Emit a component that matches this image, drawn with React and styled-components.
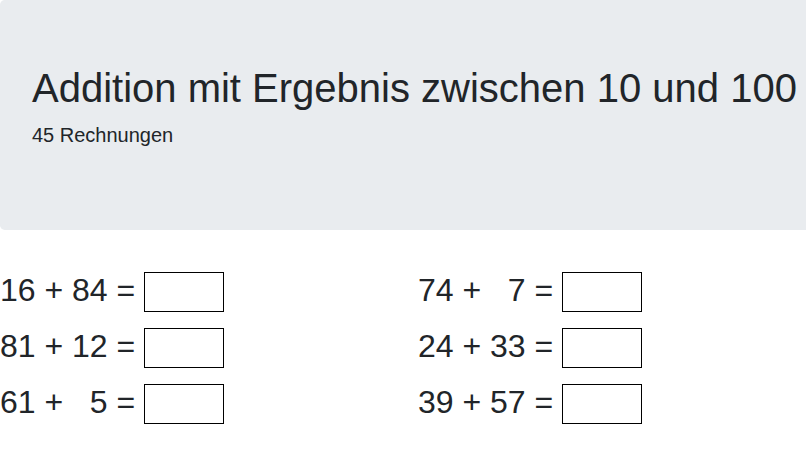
import React from 'react';
import styled, {createGlobalStyle} from "styled-components";

const GlobalStyle = createGlobalStyle`
  html, body { margin:0; padding:0; overflow:hidden; background:#fff; }
  body {
    font-family:"Liberation Sans", Arial, sans-serif;
    color:#212529;
    font-size:16px;
    line-height:1.5;
  }
  * { box-sizing:border-box; }
`

// numbers are right-aligned to two digits, two spaces = one digit in Arial
const pad = (n) => (n < 10 ? "  " + n : "" + n);

const tasks = [
  [16, 84], [74, 7],
  [81, 12], [24, 33],
  [61, 5], [39, 57],
];

export default function App(){
  return (
    <Page>
      <GlobalStyle/>
      <Jumbotron>
        <Title>Addition mit Ergebnis zwischen 10 und 100</Title>
        <Lead>45 Rechnungen</Lead>
      </Jumbotron>
      <Sheet>
        {tasks.map(([a, b], i) => (
          <Task key={i}>
            <Term>{pad(a) + " + " + pad(b) + " = "}</Term>
            <Answer type="text" aria-label="Ergebnis"/>
          </Task>
        ))}
      </Sheet>
    </Page>
  );
}

const Page = styled.div`
  width:836px;
`
const Jumbotron = styled.div`
  background:#e9ecef;
  border-radius:4.8px;
  padding:64px 32px;
  margin-bottom:32px;
`
const Title = styled.h1`
  margin:0 0 8px;
  font-size:40px;
  font-weight:500;
  line-height:1.2;
`
const Lead = styled.p`
  margin:0 0 16px;
  font-size:20px;
  font-weight:300;
  line-height:1.5;
`
const Sheet = styled.div`
  display:grid;
  grid-template-columns:418px 418px;
  grid-auto-rows:56px;
`
const Task = styled.div`
  display:flex;
  align-items:center;
`
const Term = styled.span`
  white-space:pre;
  font-size:32px;
  line-height:32px;
`
const Answer = styled.input`
  width:80px;
  height:40px;
  margin-top:4px;
  padding:0 4px;
  border:1px solid #000;
  border-radius:0;
  background:#fff;
  font-family:inherit;
  font-size:24px;
  outline:none;
`
